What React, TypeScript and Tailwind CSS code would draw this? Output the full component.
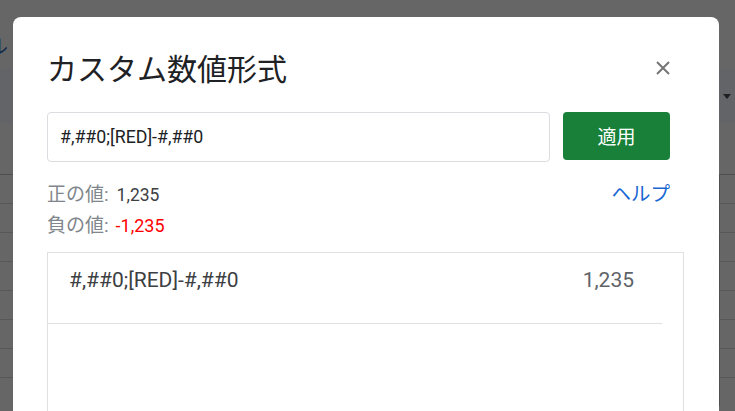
export default function App() {
  const rows = [0, 1, 2, 3, 4, 5, 6, 7];
  return (
    <div className="relative w-[735px] h-[411px] overflow-hidden bg-[#666666] font-['Roboto','Noto_Sans_CJK_JP',sans-serif]">
      {/* background spreadsheet */}
      <div className="flex flex-col h-full">
        <div className="h-[69px] relative">
          <span className="absolute left-[-12px] top-[35px] text-[20px] leading-[24px] text-[#13294b]">ル</span>
        </div>
        <div className="h-[54px] bg-[#626468] flex justify-end items-center pr-[4px]">
          <svg width="8" height="5" viewBox="0 0 8 5">
            <path d="M0 0 L8 0 L4 5 Z" fill="#1f1f1f" />
          </svg>
        </div>
        <div className="h-[51px]" />
        {rows.map((r) => (
          <div
            key={r}
            className={`h-[29px] border-t ${r === 0 ? "border-[#4f4f4f]" : "border-[#585858]"} flex justify-end`}
          >
            <div className="w-[16px] h-full border-l border-[#4f4f4f]" />
          </div>
        ))}
      </div>

      {/* dialog */}
      <div className="absolute left-[13px] top-[17px] w-[706px] h-[420px] bg-white rounded-lg pl-[34px] pr-[35px] pt-[32px]">
        <div className="flex items-center justify-between pr-[14px]">
          <h1 className="text-[30px] leading-[36px] text-[#202124] font-normal font-['Noto_Sans_CJK_JP',sans-serif]">
            カスタム数値形式
          </h1>
          <svg width="14" height="14" viewBox="0 0 14 14" className="mt-[2px]">
            <path d="M1 1 L13 13 M13 1 L1 13" stroke="#757575" strokeWidth="2" />
          </svg>
        </div>

        <div className="flex items-start mt-[27px] pr-[14px]">
          <div className="w-[503px] h-[50px] border border-[#dadce0] rounded-[4px] flex items-center px-[12px] text-[17.75px] text-[#202124]">
            #,##0;[RED]-#,##0
          </div>
          <button className="ml-[13px] w-[107px] h-[48px] bg-[#188038] rounded-[4px] text-white text-[19px] font-normal font-['Noto_Sans_CJK_JP',sans-serif]">
            適用
          </button>
        </div>

        <div className="flex justify-between mt-[17px] pr-[14px]">
          <div className="flex flex-col">
            <div className="h-[31px] flex items-center">
              <span className="text-[#80868b] text-[19px] leading-[24px]">正の値:</span>
              <span className="text-[#3c4043] text-[17.5px] leading-[24px] ml-[8px]">1,235</span>
            </div>
            <div className="h-[31px] flex items-center">
              <span className="text-[#80868b] text-[19px] leading-[24px]">負の値:</span>
              <span className="text-[#ff0000] text-[18px] leading-[24px] ml-[7px]">-1,235</span>
            </div>
          </div>
          <div className="text-[19.5px] leading-[31px] text-[#1967d2]">ヘルプ</div>
        </div>

        <div className="mt-[11px] border border-[#e0e0e0] h-[200px]">
          <div className="mr-[21px] h-[71px] border-b border-[#e0e0e0] flex items-start justify-between pl-[21px] pr-[28px] pt-[14px] text-[21px] leading-[26px]">
            <span className="text-[#3c4043]">#,##0;[RED]-#,##0</span>
            <span className="text-[#5f6368]">1,235</span>
          </div>
        </div>
      </div>
    </div>
  );
}
